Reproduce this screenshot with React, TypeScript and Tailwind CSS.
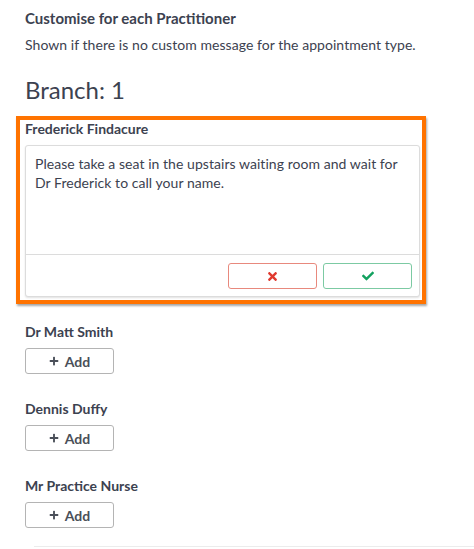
import React from "react";
import { FaTimes, FaCheck, FaPlus } from "react-icons/fa";

function AddItem({ name }: { name: string }) {
  return (
    <div className="flex flex-col">
      <div className="text-[14px] leading-[18px] font-bold text-[#3c4250]">{name}</div>
      <button className="mt-[7px] w-[89px] h-[26px] rounded-[3px] border border-[#b4b4b4] bg-white flex items-center justify-center gap-[6px] text-[14px] font-bold text-[#4a4f59]">
        <FaPlus className="w-[10px] h-[10px]" />
        <span>Add</span>
      </button>
    </div>
  );
}

export default function App() {
  return (
    <div className="relative w-[474px] h-[549px] bg-white overflow-hidden" style={{ fontFamily: "Lato, 'Noto Sans', sans-serif" }}>
      <div className="ml-[25px] w-[395px] pt-[8px] flex flex-col">
        <div className="text-[15px] leading-[20px] font-bold text-[#3c4250]">Customise for each Practitioner</div>
        <div className="mt-[7px] text-[14px] leading-[20px] tracking-[0.05px] text-[#3c4250]">
          Shown if there is no custom message for the appointment type.
        </div>
        <div className="mt-[20px] text-[24px] leading-[30px] text-[#3c4250]">Branch: 1</div>

        <div className="mt-[11px] ml-[-9px] w-[410px] border-4 border-[#ff7300] pl-[5px] pr-[2px] pb-[3px] shadow-[1px_2px_2px_rgba(0,0,0,0.35)]">
          <div className="text-[14px] leading-[18px] font-bold text-[#3c4250]">Frederick Findacure</div>
          <div className="mt-[7px] border border-[#dcdcdc] rounded-[3px] bg-white shadow-[0_1px_2px_rgba(0,0,0,0.12)]">
            <div className="h-[108px] px-[9px] pt-[8px] text-[14px] leading-[19px] tracking-[0.05px] text-[#3c4250]">
              Please take a seat in the upstairs waiting room and wait for Dr Frederick to call your name.
            </div>
            <div className="border-t border-[#dcdcdc] h-[42px] flex items-start justify-end gap-[6px] pt-[8px] pr-[7px]">
              <button className="w-[89px] h-[26px] rounded-[3px] border border-[#e8897d] bg-white flex items-center justify-center">
                <FaTimes className="w-[13px] h-[13px] text-[#e03a2f]" />
              </button>
              <button className="w-[89px] h-[26px] rounded-[3px] border border-[#7ccaa3] bg-white flex items-center justify-center">
                <FaCheck className="w-[12px] h-[12px] text-[#12a15f]" />
              </button>
            </div>
          </div>
        </div>

        <div className="mt-[19px] flex flex-col gap-[26px]">
          <AddItem name="Dr Matt Smith" />
          <AddItem name="Dennis Duffy" />
          <AddItem name="Mr Practice Nurse" />
        </div>
      </div>
      <div className="absolute left-[34px] right-0 top-[546px] border-t border-[#ececec]" />
    </div>
  );
}
